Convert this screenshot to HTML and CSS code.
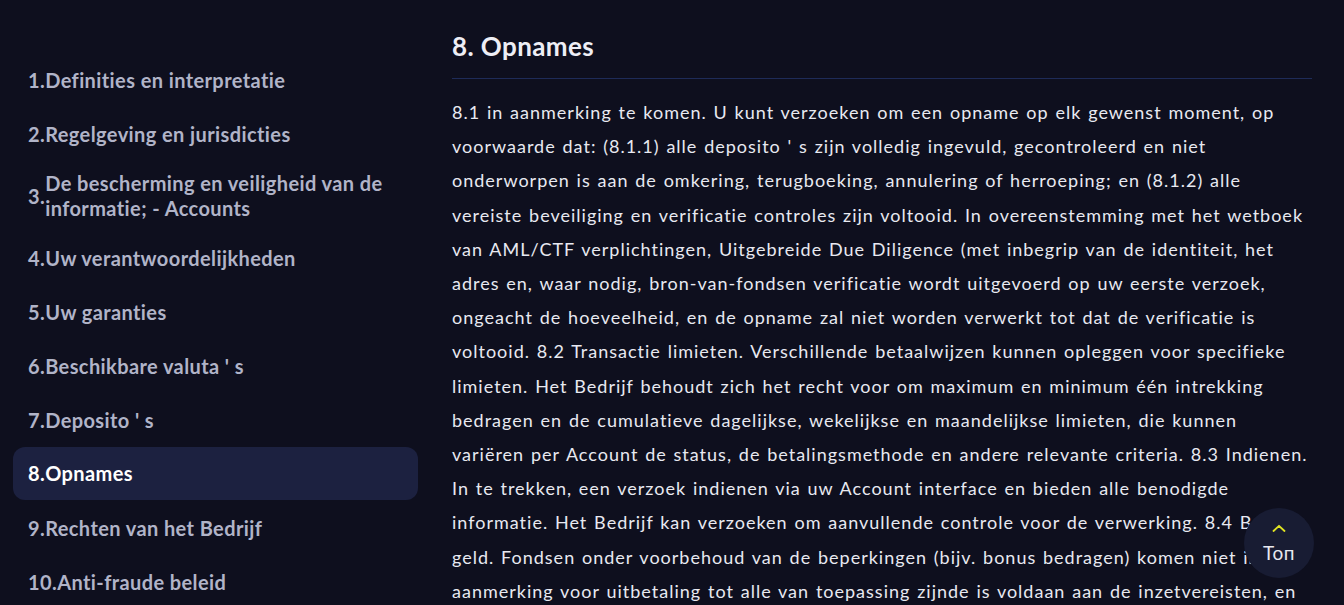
FILE: index.html
```html
<!DOCTYPE html>
<html lang="nl">
<head>
<meta charset="utf-8">
<title>Voorwaarden - Opnames</title>
<link rel="stylesheet" href="styles.css">
</head>
<body>
<div class="page">
  <nav class="toc">
    <a class="toc-item"><span class="num">1.</span><span class="label">Definities en interpretatie</span></a>
    <a class="toc-item"><span class="num">2.</span><span class="label">Regelgeving en jurisdicties</span></a>
    <a class="toc-item"><span class="num">3.</span><span class="label">De bescherming en veiligheid van de informatie; - Accounts</span></a>
    <a class="toc-item"><span class="num">4.</span><span class="label">Uw verantwoordelijkheden</span></a>
    <a class="toc-item"><span class="num">5.</span><span class="label">Uw garanties</span></a>
    <a class="toc-item"><span class="num">6.</span><span class="label">Beschikbare valuta ' s</span></a>
    <a class="toc-item"><span class="num">7.</span><span class="label">Deposito ' s</span></a>
    <a class="toc-item active"><span class="num">8.</span><span class="label">Opnames</span></a>
    <a class="toc-item"><span class="num">9.</span><span class="label">Rechten van het Bedrijf</span></a>
    <a class="toc-item"><span class="num">10.</span><span class="label">Anti-fraude beleid</span></a>
  </nav>
  <main class="content">
    <h2 class="section-title">8. Opnames</h2>
    <p class="section-text">8.1 in aanmerking te komen. U kunt verzoeken om een opname op elk gewenst moment, op<br>
voorwaarde dat: (8.1.1) alle deposito ' s zijn volledig ingevuld, gecontroleerd en niet<br>
onderworpen is aan de omkering, terugboeking, annulering of herroeping; en (8.1.2) alle<br>
vereiste beveiliging en verificatie controles zijn voltooid. In overeenstemming met het wetboek<br>
van AML/CTF verplichtingen, Uitgebreide Due Diligence (met inbegrip van de identiteit, het<br>
adres en, waar nodig, bron-van-fondsen verificatie wordt uitgevoerd op uw eerste verzoek,<br>
ongeacht de hoeveelheid, en de opname zal niet worden verwerkt tot dat de verificatie is<br>
voltooid. 8.2 Transactie limieten. Verschillende betaalwijzen kunnen opleggen voor specifieke<br>
limieten. Het Bedrijf behoudt zich het recht voor om maximum en minimum één intrekking<br>
bedragen en de cumulatieve dagelijkse, wekelijkse en maandelijkse limieten, die kunnen<br>
variëren per Account de status, de betalingsmethode en andere relevante criteria. 8.3 Indienen.<br>
In te trekken, een verzoek indienen via uw Account interface en bieden alle benodigde<br>
informatie. Het Bedrijf kan verzoeken om aanvullende controle voor de verwerking. 8.4 Bonus<br>
geld. Fondsen onder voorbehoud van de beperkingen (bijv. bonus bedragen) komen niet in<br>
aanmerking voor uitbetaling tot alle van toepassing zijnde is voldaan aan de inzetvereisten, en<br>
alle overige voorwaarden van de bonus zijn vervuld.</p>
  </main>
</div>
<a class="to-top">
  <svg class="chev" width="14" height="8" viewBox="0 0 14 8"><path d="M1.5 7 L7 1.8 L12.5 7" fill="none" stroke="#dfe322" stroke-width="1.8" stroke-linecap="round" stroke-linejoin="round"/></svg>
  <span class="to-top-label">Топ</span>
</a>
</body>
</html>
```
FILE: styles.css
```css
html, body {
  margin: 0;
  padding: 0;
  background: #0e0f1e;
  height: 100%;
  overflow: hidden;
}
body {
  font-family: "Lato", "Liberation Sans", sans-serif;
  color: #e8e9f1;
}
.page {
  display: flex;
  gap: 34px;
  padding-left: 13px;
}
.toc {
  width: 405px;
  flex: none;
  display: flex;
  flex-direction: column;
  padding-top: 53px;
}
.toc-item {
  display: flex;
  align-items: center;
  min-height: 54px;
  padding: 10px 15px;
  box-sizing: border-box;
  border-radius: 12px;
  color: #b1b4c8;
  font-size: 20px;
  font-weight: 700;
  line-height: 25px;
  letter-spacing: 0.4px;
}
.toc-item.active {
  background: #1c2140;
  color: #ffffff;
  min-height: 53px;
  margin-bottom: 1px;
}
.num { flex: none; }
.label { flex: 1; }
.content {
  width: 860px;
  flex: none;
}
.section-title {
  margin: 0;
  padding-top: 30px;
  padding-bottom: 16px;
  font-size: 26px;
  line-height: 32px;
  font-weight: 700;
  letter-spacing: 0.4px;
  color: #eeeef5;
  border-bottom: 1px solid #1e2b58;
}
.section-text {
  margin: 16px 0 0;
  font-size: 18px;
  line-height: 34.2px;
  letter-spacing: 1px;
  word-spacing: 1.2px;
  white-space: nowrap;
}
.to-top {
  position: fixed;
  right: 30px;
  bottom: 27px;
  width: 70px;
  height: 70px;
  box-sizing: border-box;
  padding-top: 16px;
  border-radius: 50%;
  background: #181c33;
  display: flex;
  flex-direction: column;
  align-items: center;
  gap: 11px;
}
.chev { display: block; }
.to-top-label {
  font-size: 19px;
  line-height: 20px;
  letter-spacing: 0.5px;
  color: #e8e9f0;
}
```
